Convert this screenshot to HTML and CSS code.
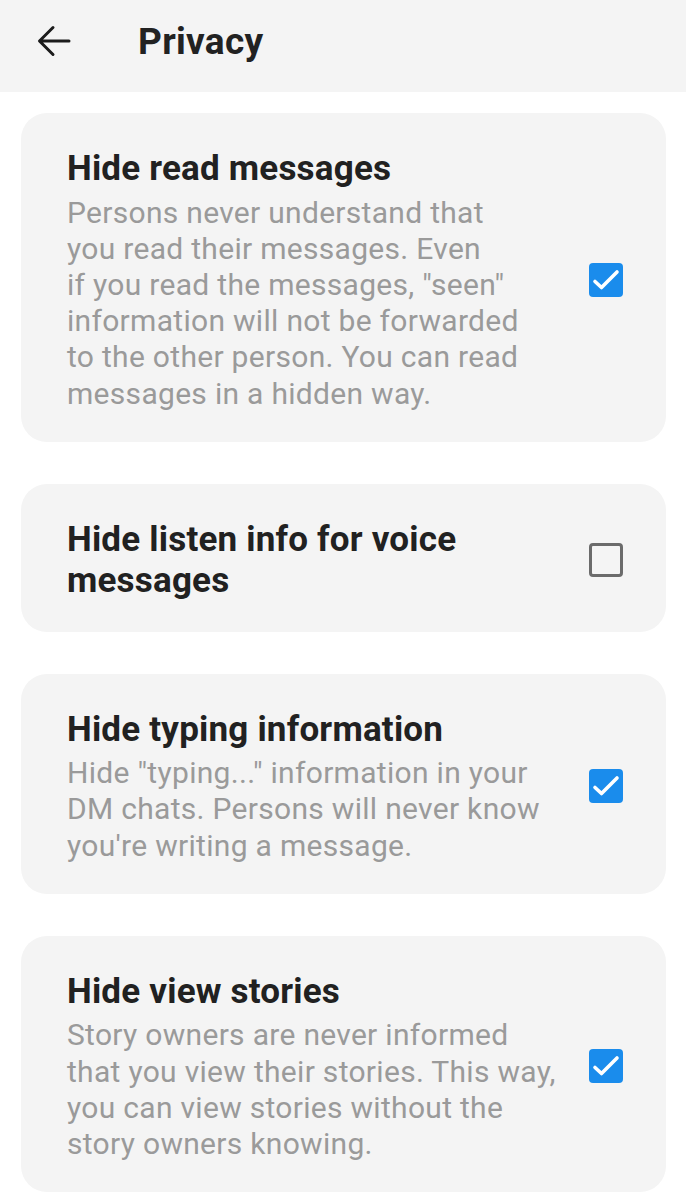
FILE: index.html
```html
<!DOCTYPE html>
<html lang="en">
<head>
  <meta charset="UTF-8" />
  <meta name="viewport" content="width=device-width, initial-scale=1.0"/>
  <title>Privacy</title>
  <link rel="stylesheet" href="styles.css">
</head>
<body>
  <header class="top-bar">
    <button class="back-btn" aria-label="Back">
      <svg width="34" height="32" viewBox="0 0 34 32">
        <path d="M32 16H3M16 2.5L2.5 16L16 29.5" fill="none" stroke="#1c1c1c" stroke-width="3" stroke-linecap="round" stroke-linejoin="round"/>
      </svg>
    </button>
    <h1>Privacy</h1>
  </header>

  <main class="settings">
    <div class="card">
      <div class="card-text">
        <h2>Hide read messages</h2>
        <p>Persons never understand that<br>you read their messages. Even<br>if you read the messages, "seen"<br>information will not be forwarded<br>to the other person. You can read<br>messages in a hidden way.</p>
      </div>
      <span class="check checked">
        <svg width="34" height="34" viewBox="0 0 34 34"><path d="M6 18.5L12.5 24.5L28 9" fill="none" stroke="#fff" stroke-width="3.6" stroke-linecap="round" stroke-linejoin="round"/></svg>
      </span>
    </div>

    <div class="card">
      <div class="card-text">
        <h2>Hide listen info for voice<br>messages</h2>
      </div>
      <span class="check"></span>
    </div>

    <div class="card">
      <div class="card-text">
        <h2>Hide typing information</h2>
        <p>Hide "typing..." information in your<br>DM chats. Persons will never know<br>you're writing a message.</p>
      </div>
      <span class="check checked">
        <svg width="34" height="34" viewBox="0 0 34 34"><path d="M6 18.5L12.5 24.5L28 9" fill="none" stroke="#fff" stroke-width="3.6" stroke-linecap="round" stroke-linejoin="round"/></svg>
      </span>
    </div>

    <div class="card">
      <div class="card-text">
        <h2>Hide view stories</h2>
        <p>Story owners are never informed<br>that you view their stories. This way,<br>you can view stories without the<br>story owners knowing.</p>
      </div>
      <span class="check checked">
        <svg width="34" height="34" viewBox="0 0 34 34"><path d="M6 18.5L12.5 24.5L28 9" fill="none" stroke="#fff" stroke-width="3.6" stroke-linecap="round" stroke-linejoin="round"/></svg>
      </span>
    </div>
  </main>
</body>
</html>
```

FILE: styles.css
```css
body {
  font-family: Roboto, 'Noto Sans', sans-serif;
  background: #fff;
  margin: 0;
  color: #212121;
}
.top-bar {
  background: #f4f4f4;
  height: 92px;
  box-sizing: border-box;
  padding: 0 0 10px 37px;
  display: flex;
  align-items: center;
}
.back-btn {
  background: none;
  border: none;
  padding: 0;
  display: flex;
  cursor: pointer;
}
.top-bar h1 {
  margin: 0 0 0 67px;
  font-size: 37px;
  letter-spacing: 0.3px;
  font-weight: 700;
  color: #222;
}
.settings {
  padding: 21px 20px 0 21px;
  display: flex;
  flex-direction: column;
  gap: 42px;
}
.card {
  background: #f4f4f4;
  border-radius: 26px;
  padding: 35px 43px 30px 46px;
  display: flex;
  align-items: center;
  gap: 16px;
}
.card-text {
  flex: 1;
}
.card h2 {
  margin: 0;
  font-size: 35px;
  line-height: 41.5px;
  letter-spacing: 0.2px;
  font-weight: 700;
  color: #212121;
}
.card p {
  margin: 5px 0 0;
  font-size: 30px;
  line-height: 36.2px;
  letter-spacing: 0.3px;
  color: #9a9a9a;
}
.check {
  width: 34px;
  height: 34px;
  box-sizing: border-box;
  border: 3px solid #6b6b6b;
  border-radius: 4px;
  flex-shrink: 0;
}
.check.checked {
  background: #1a8cec;
  border: none;
  display: flex;
}
```
